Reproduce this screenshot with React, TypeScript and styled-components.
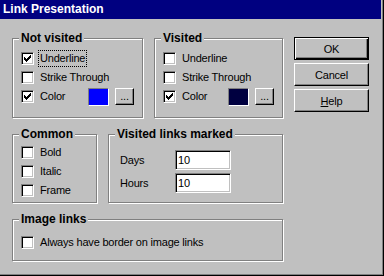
import React from 'react'
import styled, { createGlobalStyle } from 'styled-components'

const GlobalStyle = createGlobalStyle`
  html, body {
    margin: 0;
    padding: 0;
    background: #c0c0c0;
  }
  * {
    box-sizing: border-box;
  }
`

const Window = styled.div`
  width: 384px;
  height: 276px;
  background: #c0c0c0;
  border-right: 1px solid #000;
  border-bottom: 1px solid #000;
  box-shadow: inset -1px -1px 0 #808080;
  padding: 0 2px 2px 0;
  display: flex;
  flex-direction: column;
  font-family: "Liberation Sans", Arial, sans-serif;
  font-size: 11px;
  letter-spacing: -0.2px;
  color: #000;
`

const TitleBar = styled.div`
  height: 19px;
  line-height: 19px;
  background: #000080;
  color: #fff;
  font-weight: bold;
  font-size: 12px;
  letter-spacing: 0;
  padding-left: 3px;
`

const Body = styled.div`
  display: flex;
  gap: 11px;
  padding: 13px 0 0 12px;
`

const LeftCol = styled.div`
  width: 271px;
  display: flex;
  flex-direction: column;
  gap: 10px;
`

const GroupRow = styled.div`
  display: flex;
  gap: 11px;
  align-items: stretch;
`

const Group = styled.fieldset<{ $w?: number; $pt: number; $pb: number }>`
  margin: 0;
  min-inline-size: 0;
  width: ${p => (p.$w ? `${p.$w}px` : 'auto')};
  flex: ${p => (p.$w ? 'none' : '1')};
  border: 1px solid #808080;
  box-shadow: 1px 1px 0 #fff, inset 1px 1px 0 #fff;
  padding: ${p => p.$pt}px 8px ${p => p.$pb}px 8px;
`

const Legend = styled.legend`
  font-weight: bold;
  font-size: 12px;
  letter-spacing: 0;
  line-height: 13px;
  padding: 0 2px;
  margin-left: -2px;
  background: #c0c0c0;
`

const Row = styled.div`
  height: 19px;
  display: flex;
  align-items: center;
`

const CheckItem = styled.label<{ $w?: number }>`
  display: flex;
  align-items: center;
  gap: 5px;
  width: ${p => (p.$w ? `${p.$w}px` : 'auto')};
  line-height: 13px;
`

const Box = styled.span`
  width: 13px;
  height: 13px;
  flex: none;
  background: #fff;
  border: 1px solid;
  border-color: #808080 #fff #fff #808080;
  box-shadow: inset 1px 1px 0 #000, inset -1px -1px 0 #c0c0c0;
  display: flex;
  align-items: center;
  justify-content: center;
`

const Caption = styled.span<{ $focus?: boolean }>`
  padding: 1px 1px;
  outline: ${p => (p.$focus ? '1px dotted #000' : 'none')};
  white-space: nowrap;
`

const Swatch = styled.span<{ $color: string }>`
  width: 21px;
  height: 18px;
  flex: none;
  background: ${p => p.$color};
  border: 1px solid;
  border-color: #808080 #fff #fff #808080;
`

const DotsButton = styled.span`
  width: 19px;
  height: 17px;
  margin-left: 6px;
  flex: none;
  border: 1px solid;
  border-color: #fff #000 #000 #fff;
  box-shadow: inset -1px -1px 0 #808080;
  display: flex;
  align-items: flex-end;
  justify-content: center;
  line-height: 13px;
  padding-bottom: 1px;
`

const FieldGrid = styled.div`
  display: grid;
  grid-template-columns: 55px 56px;
  grid-auto-rows: 20px;
  row-gap: 3px;
  margin-left: 3px;
  align-items: center;
`

const Edit = styled.div`
  height: 20px;
  background: #fff;
  border: 1px solid;
  border-color: #808080 #fff #fff #808080;
  box-shadow: inset 1px 1px 0 #000, inset -1px -1px 0 #c0c0c0;
  padding: 0 0 0 2px;
  line-height: 18px;
`

const ButtonCol = styled.div`
  margin-top: 5px;
  display: flex;
  flex-direction: column;
  gap: 3px;
`

const Button = styled.div<{ $default?: boolean }>`
  width: 75px;
  height: 23px;
  display: flex;
  align-items: center;
  justify-content: center;
  border: 1px solid;
  border-color: ${p => (p.$default ? '#000' : '#fff #000 #000 #fff')};
  box-shadow: ${p =>
    p.$default
      ? 'inset 1px 1px 0 #fff, inset -1px -1px 0 #000, inset -2px -2px 0 #808080'
      : 'inset -1px -1px 0 #808080'};
`

const CHECK = [
  '......#',
  '.....##',
  '#...###',
  '##.###.',
  '#####..',
  '.###...',
  '..#....',
]

const checkPath = CHECK.flatMap((line, y) =>
  line.split('').map((c, x) => (c === '#' ? `M${x} ${y}h1v1h-1z` : ''))
).join('')

function Check({ checked, label, focus, w }: { checked?: boolean; label: string; focus?: boolean; w?: number }) {
  return (
    <CheckItem $w={w}>
      <Box>
        {checked && (
          <svg width="7" height="7" viewBox="0 0 7 7" shapeRendering="crispEdges">
            <path d={checkPath} fill="#000" />
          </svg>
        )}
      </Box>
      <Caption $focus={focus}>{label}</Caption>
    </CheckItem>
  )
}

function LinkStyle({ title, w, color, focus }: { title: string; w?: number; color: string; focus?: boolean }) {
  return (
    <Group $w={w} $pt={4} $pb={11}>
      <Legend>{title}</Legend>
      <Row>
        <Check label="Underline" checked={focus} focus={focus} />
      </Row>
      <Row>
        <Check label="Strike Through" />
      </Row>
      <Row>
        <Check label="Color" checked w={70} />
        <Swatch $color={color} />
        <DotsButton>...</DotsButton>
      </Row>
    </Group>
  )
}

export default function App() {
  return (
    <>
      <GlobalStyle />
      <Window>
        <TitleBar>Link Presentation</TitleBar>
        <Body>
          <LeftCol>
            <GroupRow>
              <LinkStyle title="Not visited" w={131} color="#0000ff" focus />
              <LinkStyle title="Visited" color="#000040" />
            </GroupRow>
            <GroupRow>
              <Group $w={85} $pt={2} $pb={2}>
                <Legend>Common</Legend>
                <Row><Check label="Bold" /></Row>
                <Row><Check label="Italic" /></Row>
                <Row><Check label="Frame" /></Row>
              </Group>
              <Group $pt={9} $pb={9}>
                <Legend>Visited links marked</Legend>
                <FieldGrid>
                  <span>Days</span>
                  <Edit>10</Edit>
                  <span>Hours</span>
                  <Edit>10</Edit>
                </FieldGrid>
              </Group>
            </GroupRow>
            <Group $pt={7} $pb={8}>
              <Legend>Image links</Legend>
              <Row><Check label="Always have border on image links" /></Row>
            </Group>
          </LeftCol>
          <ButtonCol>
            <Button $default>OK</Button>
            <Button>Cancel</Button>
            <Button><span><u>H</u>elp</span></Button>
          </ButtonCol>
        </Body>
      </Window>
    </>
  )
}
